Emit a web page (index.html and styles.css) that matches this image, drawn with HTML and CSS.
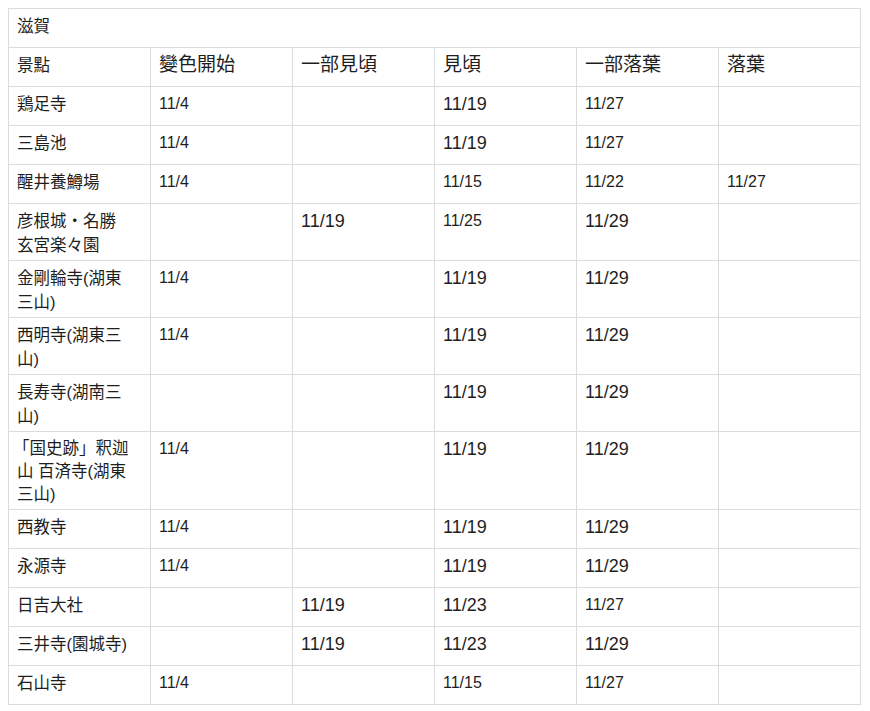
FILE: index.html
```html
<!DOCTYPE html>
<html lang="ja">
<head>
<meta charset="utf-8">
<title>滋賀</title>
<link rel="stylesheet" href="styles.css">
</head>
<body>
<table class="koyo">
  <colgroup>
    <col class="c"><col class="c"><col class="c"><col class="c"><col class="c"><col class="c">
  </colgroup>
  <tr><td class="name" colspan="6">滋賀</td></tr>
  <tr>
    <td class="name">景點</td>
    <td class="head">變色開始</td>
    <td class="head">一部見頃</td>
    <td class="head">見頃</td>
    <td class="head">一部落葉</td>
    <td class="head">落葉</td>
  </tr>
  <tr><td class="name">鶏足寺</td><td class="sm">11/4</td><td></td><td class="lg">11/19</td><td class="sm">11/27</td><td></td></tr>
  <tr><td class="name">三島池</td><td class="sm">11/4</td><td></td><td class="lg">11/19</td><td class="sm">11/27</td><td></td></tr>
  <tr><td class="name">醒井養鱒場</td><td class="sm">11/4</td><td></td><td class="sm">11/15</td><td class="sm">11/22</td><td class="sm">11/27</td></tr>
  <tr><td class="name">彦根城・名勝<br>玄宮楽々園</td><td></td><td class="lg">11/19</td><td class="sm">11/25</td><td class="lg">11/29</td><td></td></tr>
  <tr><td class="name">金剛輪寺(湖東<br>三山)</td><td class="sm">11/4</td><td></td><td class="lg">11/19</td><td class="lg">11/29</td><td></td></tr>
  <tr><td class="name">西明寺(湖東三<br>山)</td><td class="sm">11/4</td><td></td><td class="lg">11/19</td><td class="lg">11/29</td><td></td></tr>
  <tr><td class="name">長寿寺(湖南三<br>山)</td><td></td><td></td><td class="lg">11/19</td><td class="lg">11/29</td><td></td></tr>
  <tr class="three"><td class="name"><span class="bracket">「国史跡」釈迦</span><br>山 百済寺(湖東<br>三山)</td><td class="sm">11/4</td><td></td><td class="lg">11/19</td><td class="lg">11/29</td><td></td></tr>
  <tr><td class="name">西教寺</td><td class="sm">11/4</td><td></td><td class="lg">11/19</td><td class="lg">11/29</td><td></td></tr>
  <tr><td class="name">永源寺</td><td class="sm">11/4</td><td></td><td class="lg">11/19</td><td class="lg">11/29</td><td></td></tr>
  <tr><td class="name">日吉大社</td><td></td><td class="lg">11/19</td><td class="lg">11/23</td><td class="sm">11/27</td><td></td></tr>
  <tr><td class="name">三井寺(園城寺)</td><td></td><td class="lg">11/19</td><td class="lg">11/23</td><td class="lg">11/29</td><td></td></tr>
  <tr><td class="name">石山寺</td><td class="sm">11/4</td><td></td><td class="sm">11/15</td><td class="sm">11/27</td><td></td></tr>
</table>
</body>
</html>
```

FILE: styles.css
```css
html, body {
  background: #ffffff;
}
body {
  margin: 8px;
  font-family: "Liberation Sans", "Noto Sans CJK JP", sans-serif;
  color: #1e1e1e;
}
.koyo {
  border-collapse: collapse;
  table-layout: fixed;
  width: 852px;
}
.koyo .c {
  width: 142px;
}
.koyo tr {
  height: 39px;
}
.koyo td {
  border: 1px solid #dcdcdc;
  padding: 5px 8px 3px;
  vertical-align: top;
  font-size: 16px;
  line-height: 24px;
  text-align: left;
}
.koyo td.name {
  font-size: 16.5px;
}
.koyo tr.three td.name {
  line-height: 23px;
  padding-bottom: 3px;
}
.koyo td.head {
  font-size: 19px;
}
.koyo td.sm {
  font-size: 16px;
}
.koyo td.lg {
  font-size: 18px;
}
.bracket {
  margin-left: -4px;
}
```
